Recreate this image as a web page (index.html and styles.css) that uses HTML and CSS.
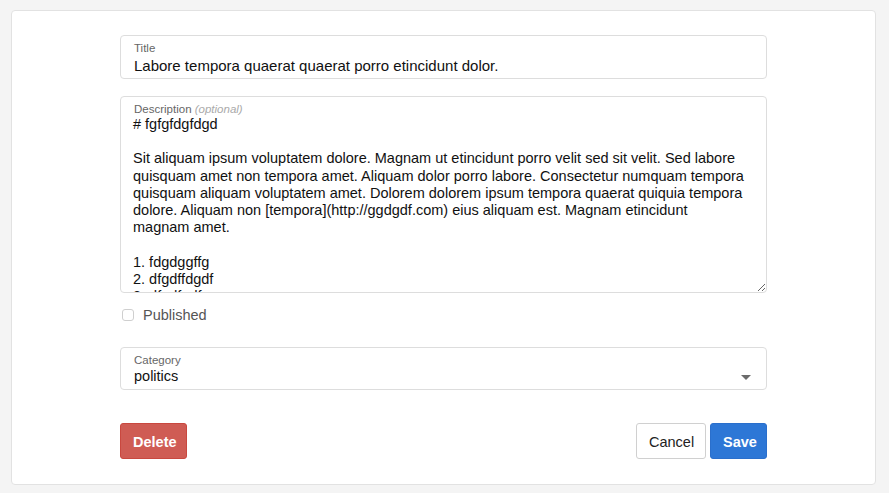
FILE: index.html
```html
<!DOCTYPE html>
<html>
<head>
<meta charset="utf-8">
<link rel="stylesheet" href="styles.css">
</head>
<body>
<div class="card">
  <form class="form">
    <div class="field">
      <label class="field-label">Title</label>
      <input class="field-input" type="text" value="Labore tempora quaerat quaerat porro etincidunt dolor.">
    </div>
    <div class="field field-area">
      <label class="field-label">Description <em class="optional">(optional)</em></label>
      <textarea class="field-textarea" wrap="off"># fgfgfdgfdgd

Sit aliquam ipsum voluptatem dolore. Magnam ut etincidunt porro velit sed sit velit. Sed labore
quisquam amet non tempora amet. Aliquam dolor porro labore. Consectetur numquam tempora
quisquam aliquam voluptatem amet. Dolorem dolorem ipsum tempora quaerat quiquia tempora
dolore. Aliquam non [tempora](http://ggdgdf.com) eius aliquam est. Magnam etincidunt
magnam amet.

1. fdgdggffg
2. dfgdffdgdf
3. dfgdfgdfg</textarea>
    </div>
    <label class="check">
      <span class="check-box"></span>
      <span class="check-text">Published</span>
    </label>
    <div class="field field-select">
      <label class="field-label">Category</label>
      <div class="select-row">
        <span class="field-value">politics</span>
        <svg class="caret" width="10" height="6" viewBox="0 0 10 6"><path d="M0 0H10L5 5Z" fill="#6b6b6b"/></svg>
      </div>
    </div>
    <div class="actions">
      <button type="button" class="btn btn-danger">Delete</button>
      <div class="actions-right">
        <button type="button" class="btn btn-default">Cancel</button>
        <button type="button" class="btn btn-primary">Save</button>
      </div>
    </div>
  </form>
</div>
</body>
</html>
```
FILE: styles.css
```css
* { box-sizing: border-box; }
html, body { margin: 0; padding: 0; }
body {
  background: #f4f4f4;
  font-family: "Liberation Sans", Arial, sans-serif;
  color: #111;
  padding: 10px 13px 0 11px;
}
.card {
  background: #fff;
  border: 1px solid #e2e2e2;
  border-radius: 4px;
  height: 475px;
  padding: 24px 108px 0 108px;
}
.form {
  display: flex;
  flex-direction: column;
}
.field {
  border: 1px solid #dddddd;
  border-radius: 4px;
  padding: 6px 12px 4px 13px;
  display: flex;
  flex-direction: column;
}
.field-label {
  font-size: 11.5px;
  line-height: 13px;
  color: #666;
}
.optional {
  color: #aaa;
}
.field-input {
  border: none;
  outline: none;
  padding: 0;
  margin: 0;
  font-family: inherit;
  font-size: 15px;
  line-height: 19px;
  height: 19px;
  margin-top: 1px;
  margin-bottom: -1px;
  color: #111;
  background: transparent;
}
.field-area {
  margin-top: 17px;
  padding: 6px 0 0 0;
}
.field-area .field-label { padding-left: 13px; }
.field-textarea {
  border: none;
  outline: none;
  margin: 0;
  padding: 0 12px 0 12px;
  font-family: inherit;
  font-size: 14.5px;
  line-height: 17.2px;
  color: #111;
  height: 176px;
  width: 100%;
  resize: vertical;
  overflow: hidden;
  white-space: pre;
  display: block;
  background: transparent;
}
.check {
  display: flex;
  align-items: center;
  height: 20px;
  margin-top: 12px;
  padding-left: 2px;
}
.check-box {
  width: 12px;
  height: 12px;
  border: 1px solid #cfcfcf;
  border-radius: 3px;
  background: #fff;
}
.check-text {
  margin-left: 9px;
  font-size: 14.5px;
  color: #555;
}
.field-select {
  margin-top: 22px;
  padding-bottom: 3px;
}
.select-row {
  display: flex;
  align-items: center;
  justify-content: space-between;
}
.field-value {
  font-size: 14.5px;
  line-height: 19px;
  color: #111;
}
.caret {
  margin-right: 3px;
  margin-top: 2px;
}
.actions {
  margin-top: 33px;
  display: flex;
  justify-content: space-between;
}
.actions-right {
  display: flex;
  gap: 4px;
}
.btn {
  height: 36px;
  border-radius: 3px;
  font-family: inherit;
  font-size: 14.5px;
  padding: 0 12px;
  padding-top: 1px;
  border: 1px solid transparent;
  cursor: pointer;
}
.btn-danger {
  background: #cf5c54;
  border-color: #c9483f;
  color: #fff;
  font-weight: bold;
  width: 67px;
}
.btn-default {
  background: #fff;
  border-color: #d0d0d0;
  color: #222;
  width: 70px;
}
.btn-primary {
  background: #2d77d6;
  border-color: #2a6fcc;
  color: #fff;
  font-weight: bold;
  width: 57px;
}
```
